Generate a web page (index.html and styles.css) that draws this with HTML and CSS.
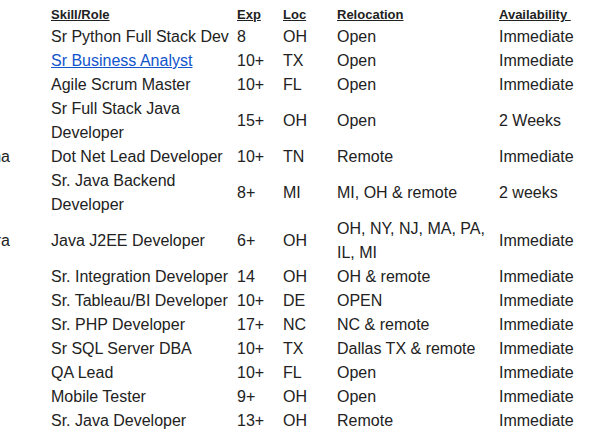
FILE: index.html
```html
<!DOCTYPE html>
<html lang="en">
<head>
<meta charset="utf-8">
<title>Consultants</title>
<link rel="stylesheet" href="styles.css">
</head>
<body>
<div class="sheet">
  <table class="hotlist">
    <colgroup>
      <col class="c-name">
      <col class="c-skill">
      <col class="c-exp">
      <col class="c-loc">
      <col class="c-reloc">
      <col class="c-avail">
    </colgroup>
    <thead>
      <tr>
        <th class="name"></th>
        <th><span class="hd">Skill/Role</span></th>
        <th><span class="hd">Exp</span></th>
        <th><span class="hd">Loc</span></th>
        <th><span class="hd">Relocation</span></th>
        <th><span class="hd">Availability&nbsp;</span></th>
      </tr>
    </thead>
    <tbody>
      <tr><td class="name"></td><td>Sr Python Full Stack Dev</td><td>8</td><td>OH</td><td>Open</td><td>Immediate</td></tr>
      <tr><td class="name"></td><td><a class="link" href="#">Sr Business Analyst</a></td><td>10+</td><td>TX</td><td>Open</td><td>Immediate</td></tr>
      <tr><td class="name"></td><td>Agile Scrum Master</td><td>10+</td><td>FL</td><td>Open</td><td>Immediate</td></tr>
      <tr><td class="name"></td><td>Sr Full Stack Java<br>Developer</td><td>15+</td><td>OH</td><td>Open</td><td>2 Weeks</td></tr>
      <tr><td class="name">Krishna</td><td>Dot Net Lead Developer</td><td>10+</td><td>TN</td><td>Remote</td><td>Immediate</td></tr>
      <tr><td class="name"></td><td>Sr. Java Backend<br>Developer</td><td>8+</td><td>MI</td><td>MI, OH &amp; remote</td><td>2 weeks</td></tr>
      <tr><td class="name">Chandra</td><td>Java J2EE Developer</td><td>6+</td><td>OH</td><td>OH, NY, NJ, MA, PA,<br>IL, MI</td><td>Immediate</td></tr>
      <tr><td class="name"></td><td>Sr. Integration Developer</td><td>14</td><td>OH</td><td>OH &amp; remote</td><td>Immediate</td></tr>
      <tr><td class="name"></td><td>Sr. Tableau/BI Developer</td><td>10+</td><td>DE</td><td>OPEN</td><td>Immediate</td></tr>
      <tr><td class="name"></td><td>Sr. PHP Developer</td><td>17+</td><td>NC</td><td>NC &amp; remote</td><td>Immediate</td></tr>
      <tr><td class="name"></td><td>Sr SQL Server DBA</td><td>10+</td><td>TX</td><td>Dallas TX &amp; remote</td><td>Immediate</td></tr>
      <tr><td class="name"></td><td>QA Lead</td><td>10+</td><td>FL</td><td>Open</td><td>Immediate</td></tr>
      <tr><td class="name"></td><td>Mobile Tester</td><td>9+</td><td>OH</td><td>Open</td><td>Immediate</td></tr>
      <tr><td class="name"></td><td>Sr. Java Developer</td><td>13+</td><td>OH</td><td>Remote</td><td>Immediate</td></tr>
    </tbody>
  </table>
</div>
</body>
</html>
```
FILE: styles.css
```css
html, body {
  margin: 0;
  padding: 0;
  background: #ffffff;
}

body {
  font-family: "Liberation Sans", Arial, sans-serif;
  color: #222222;
}

.sheet {
  padding-top: 5px;
}

.hotlist {
  border-collapse: collapse;
  table-layout: fixed;
  width: 659px;
  margin-left: -60px;
  font-size: 16px;
  line-height: 24px;
}

.c-name { width: 111px; }
.c-skill { width: 186px; }
.c-exp { width: 46px; }
.c-loc { width: 54px; }
.c-reloc { width: 162px; }
.c-avail { width: 100px; }

.hotlist th,
.hotlist td {
  padding: 0;
  text-align: left;
  vertical-align: middle;
  white-space: nowrap;
}

.hotlist th {
  font-size: 13px;
  line-height: 20px;
  font-weight: bold;
  color: #222222;
}

.hd {
  text-decoration: underline;
}

.hotlist .name {
  text-align: right;
  padding-right: 41px;
  overflow: hidden;
}

.link {
  color: #1155cc;
  text-decoration: underline;
}
```
